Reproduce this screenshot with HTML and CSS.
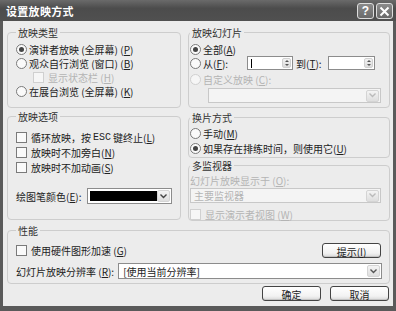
FILE: index.html
```html
<!DOCTYPE html>
<html lang="zh-CN">
<head>
  <meta charset="UTF-8" />
  <title>设置放映方式</title>
  <link rel="stylesheet" href="styles.css">
</head>
<body>
  <div class="window">
    <div class="titlebar">
      <span class="title">设置放映方式</span>
      <div class="tb-btns">
        <span class="tb-btn">?</span>
        <span class="tb-btn">
          <svg width="11" height="11" viewBox="0 0 11 11"><path d="M1.5 1.5 L9.5 9.5 M9.5 1.5 L1.5 9.5" stroke="#fff" stroke-width="2"/></svg>
        </span>
      </div>
    </div>

    <div class="client">
      <div class="top">
        <div class="col col-left">
          <fieldset class="group g-type">
            <legend>放映类型</legend>
            <div class="row"><span class="radio on"></span>演讲者放映 (全屏幕) (<u>P</u>)</div>
            <div class="row"><span class="radio"></span>观众自行浏览 (窗口) (<u>B</u>)</div>
            <div class="row sub disabled"><span class="check"></span>显示状态栏 (<u>H</u>)</div>
            <div class="row"><span class="radio"></span>在展台浏览 (全屏幕) (<u>K</u>)</div>
          </fieldset>

          <fieldset class="group g-opts">
            <legend>放映选项</legend>
            <div class="row"><span class="check"></span>循环放映，按 <span class="mono">ESC</span> 键终止(<u>L</u>)</div>
            <div class="row"><span class="check"></span>放映时不加旁白(<u>N</u>)</div>
            <div class="row"><span class="check"></span>放映时不加动画(<u>S</u>)</div>
            <div class="row pen">
              绘图笔颜色(<u>E</u>):
              <span class="select color-select">
                <span class="swatch"></span>
                <span class="drop"><svg width="7" height="5" viewBox="0 0 7 5"><path d="M0.5 0.5 L3.5 3.5 L6.5 0.5" stroke="#444" stroke-width="1.4" fill="none"/></svg></span>
              </span>
            </div>
          </fieldset>
        </div>

        <div class="col col-right">
          <fieldset class="group g-slides">
            <legend>放映幻灯片</legend>
            <div class="row"><span class="radio on"></span>全部(<u>A</u>)</div>
            <div class="row range">
              <span class="radio"></span>从(<u>F</u>):
              <span class="spin first"><span class="caret"></span><span class="spin-btn"></span></span>
              <span class="to">到(<u>T</u>):</span>
              <span class="spin second"><span class="spin-btn"></span></span>
            </div>
            <div class="row disabled custom"><span class="radio"></span>自定义放映 (<u>C</u>):</div>
            <span class="select wide disabled-select">
              <span class="sel-text"></span>
              <span class="drop"><svg width="7" height="5" viewBox="0 0 7 5"><path d="M0.5 0.5 L3.5 3.5 L6.5 0.5" stroke="#bbb" stroke-width="1.4" fill="none"/></svg></span>
            </span>
          </fieldset>

          <fieldset class="group g-advance">
            <legend>换片方式</legend>
            <div class="row"><span class="radio"></span>手动(<u>M</u>)</div>
            <div class="row"><span class="radio on"></span>如果存在排练时间，则使用它(<u>U</u>)</div>
          </fieldset>

          <fieldset class="group g-monitor">
            <legend>多监视器</legend>
            <div class="row disabled plain">幻灯片放映显示于 (<u>O</u>):</div>
            <span class="select wide disabled-select">
              <span class="sel-text">主要监视器</span>
              <span class="drop"><svg width="7" height="5" viewBox="0 0 7 5"><path d="M0.5 0.5 L3.5 3.5 L6.5 0.5" stroke="#bbb" stroke-width="1.4" fill="none"/></svg></span>
            </span>
            <div class="row disabled"><span class="check"></span>显示演示者视图 (<u>W</u>)</div>
          </fieldset>
        </div>
      </div>

      <fieldset class="group g-perf">
        <legend>性能</legend>
        <div class="row accel">
          <span class="check"></span>使用硬件图形加速 (<u>G</u>)
          <button class="btn tips">提示(<u>I</u>)</button>
        </div>
        <div class="row res">
          幻灯片放映分辨率 (<u>R</u>):
          <span class="select res-select">
            <span class="sel-text">[使用当前分辨率]</span>
            <span class="drop"><svg width="7" height="5" viewBox="0 0 7 5"><path d="M0.5 0.5 L3.5 3.5 L6.5 0.5" stroke="#555" stroke-width="1.4" fill="none"/></svg></span>
          </span>
        </div>
      </fieldset>

      <div class="actions">
        <button class="btn">确定</button>
        <button class="btn">取消</button>
      </div>
    </div>
  </div>
</body>
</html>
```

FILE: styles.css
```css
* { box-sizing: border-box; }
body {
  margin: 0;
  background: #fff;
  font-family: "Noto Sans CJK SC", "Liberation Sans", sans-serif;
  font-size: 10px;
  color: #222;
}
.window {
  width: 396px;
  height: 311px;
  display: flex;
  flex-direction: column;
  background: #5a5a5a;
}
.titlebar {
  height: 21px;
  display: flex;
  align-items: center;
  justify-content: space-between;
  padding: 0 3px 0 6px;
  background: linear-gradient(#6a6a6a, #4c4c4c 40%, #505050);
}
.title {
  color: #fff;
  font-size: 11px;
  font-weight: bold;
  letter-spacing: 0.3px;
}
.tb-btns {
  display: flex;
  gap: 2px;
  padding-top: 1px;
}
.tb-btn {
  width: 17px;
  height: 16px;
  border: 1px solid #ddd;
  border-radius: 3px;
  background: linear-gradient(#8a8a8a, #6a6a6a);
  color: #fff;
  font: bold 12px "Liberation Sans", sans-serif;
  display: flex;
  align-items: center;
  justify-content: center;
}
.client {
  flex: 1;
  margin: 0 3px 5px 3px;
  background: #ececec;
  padding: 5px 3px 0 4px;
  display: flex;
  flex-direction: column;
}
.top {
  display: flex;
  gap: 7px;
}
.col {
  display: flex;
  flex-direction: column;
}
.col-left { width: 174px; gap: 2px; }
.col-right { flex: 1; }

.group {
  margin: 0;
  padding: 0 8px;
  border: 1px solid #cdcdcd;
  border-radius: 4px;
  min-width: 0;
}
.group legend {
  padding: 0 2px;
  line-height: 13px;
  color: #333;
}
.row {
  display: flex;
  align-items: center;
  height: 14px;
  white-space: nowrap;
}
u { text-decoration: underline; }
.mono { font-family: "Liberation Mono", monospace; margin: 0 2px; }

.radio, .check {
  width: 11px;
  height: 11px;
  border: 1px solid #7a7a7a;
  background: #fafafa;
  margin-right: 2px;
  flex: none;
  display: inline-flex;
  align-items: center;
  justify-content: center;
}
.radio { border-radius: 50%; }
.radio.on::after {
  content: "";
  width: 5px;
  height: 5px;
  border-radius: 50%;
  background: #444;
}
.check { margin-right: 4px; }
.disabled { color: #b4b4b4; }
.disabled .radio, .disabled .check { border-color: #d0d0d0; background: #f6f6f6; }
.sub { padding-left: 17px; }

.g-type { height: 82px; padding-top: 3px; }
.g-opts { height: 110px; padding-top: 7px; }
.g-opts .row { height: 15px; }
.pen { margin-top: 12px; height: 18px !important; }

.g-slides { height: 82px; padding-top: 3px; padding-left: 1px; }
.custom { margin-top: 2px; }
.g-advance { height: 47px; margin-top: 3px; padding-left: 1px; padding-top: 2px; }
.g-advance .row { height: 15px; }
.g-monitor { height: 62px; margin-top: 1px; padding-left: 1px; }
.g-monitor .plain { padding-left: 0; }

.select {
  display: flex;
  align-items: center;
  background: #fff;
  border: 1px solid #8c8c8c;
  height: 16px;
}
.drop {
  width: 13px;
  height: 12px;
  margin: 0 1px 0 auto;
  border: 1px solid #d4d4d4;
  border-radius: 2px;
  background: linear-gradient(#f4f4f4, #dedede);
  display: flex;
  align-items: center;
  justify-content: center;
  flex: none;
}
.color-select { width: 85px; margin-left: 6px; padding-left: 2px; }
.swatch { width: 67px; height: 10px; background: #000; }
.wide { margin-left: 18px; height: 15px; }
.disabled-select { border-color: #c8c8c8; background: #f4f4f4; margin-top: 2px; }
.disabled-select .sel-text { color: #b4b4b4; padding-left: 3px; }
.g-monitor .wide { margin-left: 0; margin-top: 1px; }
.g-monitor .row.disabled:last-child { margin-top: 4px; }
.g-monitor .row.plain { margin-top: 1px; }

.spin {
  width: 46px;
  height: 14px;
  border: 1px solid #8c8c8c;
  background: #fff;
  display: flex;
  align-items: center;
}
.spin.first { margin-left: 19px; }
.spin.second { margin-left: 6px; width: 47px; }
.caret { width: 1px; height: 9px; background: #000; margin-left: 3px; }
.spin-btn {
  width: 9px;
  height: 10px;
  margin: 0 1px 0 auto;
  border: 1px solid #d0d0d0;
  border-radius: 2px;
  background: linear-gradient(#f2f2f2, #dcdcdc);
  position: relative;
}
.spin-btn::before, .spin-btn::after {
  content: "";
  position: absolute;
  left: 2px;
  border-left: 2px solid transparent;
  border-right: 2px solid transparent;
}
.spin-btn::before { top: 1px; border-bottom: 2px solid #555; }
.spin-btn::after { bottom: 1px; border-top: 2px solid #555; }
.to { margin-left: 3px; }

.g-perf { height: 60px; margin-top: 3px; padding-top: 4px; padding-right: 7px; }
.accel { height: 18px; }
.res { height: 20px; margin-top: 2px; }
.res-select { flex: 1; margin-left: 4px; height: 16px; }
.res-select .sel-text { padding-left: 4px; }

.btn {
  font: inherit;
  color: #222;
  height: 15px;
  width: 59px;
  padding: 0;
  border: 1px solid #444;
  border-radius: 3px;
  background: linear-gradient(#fff, #f2f2f2 70%, #d8d8d8);
  box-shadow: inset 0 -1px 0 #c4c4c4;
}
.tips { margin-left: auto; margin-right: 1px; }
.actions {
  display: flex;
  justify-content: flex-end;
  gap: 9px;
  padding: 2px 1px 0 0;
}
```
